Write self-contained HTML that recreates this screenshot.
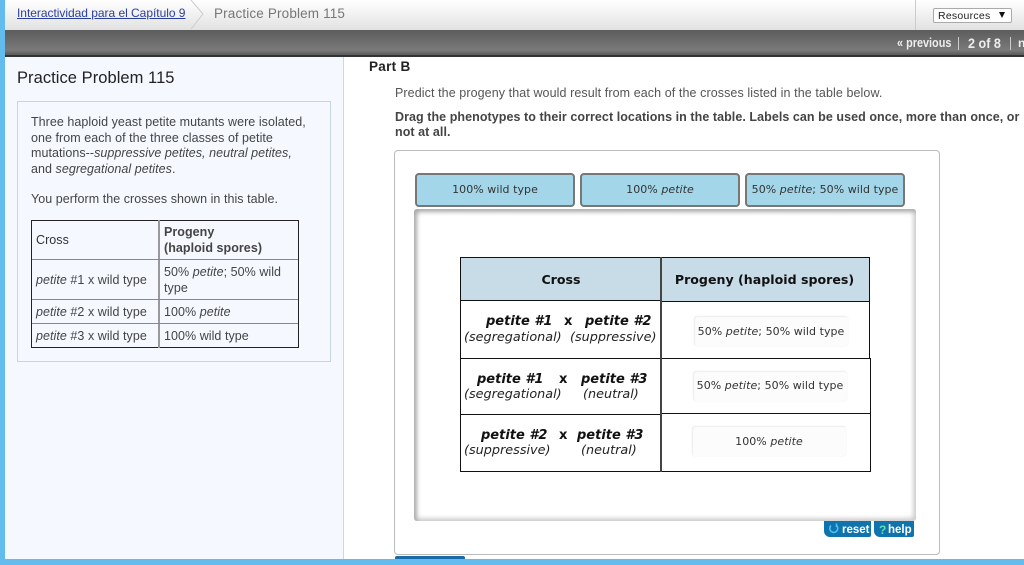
<!DOCTYPE html>
<html><head><meta charset="utf-8"><style>
html,body{margin:0;padding:0}
body{width:1024px;height:565px;overflow:hidden;position:relative;background:#fff;font-family:"Liberation Sans",sans-serif;color:#444}
.a{position:absolute;white-space:nowrap}
.b{position:absolute;box-sizing:border-box}
.v{font-family:"DejaVu Sans",sans-serif}
.ln{position:absolute;background:#111}
.chip{position:absolute;box-sizing:border-box;width:160px;height:34px;background:#a4d6ea;border:2px solid #777;border-radius:4px;font:11px/30px "DejaVu Sans",sans-serif;letter-spacing:.05px;text-align:center;color:#333;white-space:nowrap}
.drop{position:absolute;box-sizing:border-box;background:#fcfcfc;border-radius:3px;box-shadow:0 0 1px #ddd,inset 1px 1px 1px #eee;width:154px;height:30px;font:11px/30px "DejaVu Sans",sans-serif;letter-spacing:.05px;text-align:center;color:#333;white-space:nowrap}
.t{font-size:12.5px;line-height:15.5px;color:#444;letter-spacing:.05px}
.c{position:absolute;font:bold italic 13px/15px "DejaVu Sans",sans-serif;color:#111;white-space:pre}
.s{position:absolute;font:italic 12.8px/15px "DejaVu Sans",sans-serif;color:#222;white-space:pre}
</style></head><body>
<div class="b" style="left:0;top:0;width:1024px;height:30px;background:linear-gradient(#fff,#e2e2e2)"></div>
<svg class="b" style="left:190px;top:0" width="16" height="30"><path d="M1 0L13 14L1 29" fill="none" stroke="#ccc"/></svg>
<div class="a" style="left:17px;top:6px;font-size:12px;line-height:14px;color:#2b3f9e;text-decoration:underline;letter-spacing:-.03px">Interactividad para el Capítulo 9</div>
<div class="a" style="left:214px;top:6px;font-size:13.5px;line-height:16px;color:#777;letter-spacing:.15px">Practice Problem 115</div>
<div class="b" style="left:915px;top:0;width:1px;height:30px;background:#ccc"></div>
<div class="b" style="left:933px;top:8px;width:79px;height:15px;background:#fff;border:1px solid #aaa;border-radius:2px"></div>
<div class="a" style="left:938px;top:10px;font-size:10.5px;line-height:13px;color:#222;letter-spacing:.25px">Resources</div>
<svg class="b" style="left:998px;top:11px" width="9" height="8"><path d="M1 1H7L4 7Z" fill="#111"/></svg>
<div class="b" style="left:5px;top:30px;width:1019px;height:27px;background:linear-gradient(#5c5c5c,#7a7a7a 75%,#5a5a5a 92%,#333 93%)"></div>
<div class="a" style="left:897px;top:36px;font-size:12.5px;line-height:15px;color:#eee;font-weight:bold;transform-origin:0 0;transform:scaleX(.87)">« previous</div>
<div class="b" style="left:958px;top:37px;width:1px;height:13px;background:#ccc"></div>
<div class="a" style="left:968px;top:35px;font-size:14px;line-height:16px;color:#eee;font-weight:bold;transform-origin:0 0;transform:scaleX(.9)">2 of 8</div>
<div class="b" style="left:1010px;top:37px;width:1px;height:13px;background:#ccc"></div>
<div class="a" style="left:1018px;top:36px;font-size:12px;line-height:15px;color:#eee;font-weight:bold">n</div>

<div class="b" style="left:0;top:0;width:5px;height:565px;background:#64bcee"></div>
<div class="b" style="left:0;top:559px;width:1024px;height:6px;background:#64bcee;z-index:5"></div>
<div class="b" style="left:5px;top:57px;width:339px;height:502px;background:#f5f9ff;border-right:1px solid #c9d8e4"></div>
<div class="a" style="left:17px;top:69px;font-size:16.5px;line-height:19px;color:#222;letter-spacing:.05px">Practice Problem 115</div>
<div class="b" style="left:17px;top:101px;width:314px;height:261px;border:1px solid #c5d6e3"></div>
<div class="a t" style="left:31px;top:115px">Three haploid yeast petite mutants were isolated,<br>one from each of the three classes of petite<br>mutations--<i>suppressive petites, neutral petites,</i><br>and <i>segregational petites</i>.</div>
<div class="a t" style="left:31px;top:192px">You perform the crosses shown in this table.</div>
<div class="b" style="left:31px;top:220px;width:268px;height:128px;border:1px solid #222"></div>
<div class="b" style="left:158px;top:220px;width:2px;height:128px;background:#999"></div>
<div class="b" style="left:32px;top:259px;width:266px;height:1px;background:#888"></div>
<div class="b" style="left:32px;top:299px;width:266px;height:1px;background:#888"></div>
<div class="b" style="left:32px;top:323px;width:266px;height:1px;background:#888"></div>
<div class="a t" style="left:36px;top:233px;color:#333">Cross</div>
<div class="a t" style="left:164px;top:225px"><b style="font-weight:bold;color:#444">Progeny<br>(haploid spores)</b></div>
<div class="a t" style="left:36px;top:273px"><i>petite</i> #1 x wild type</div>
<div class="a t" style="left:164px;top:265px">50% <i>petite</i>; 50% wild<br>type</div>
<div class="a t" style="left:36px;top:305px"><i>petite</i> #2 x wild type</div>
<div class="a t" style="left:164px;top:305px">100% <i>petite</i></div>
<div class="a t" style="left:36px;top:329px"><i>petite</i> #3 x wild type</div>
<div class="a t" style="left:164px;top:329px">100% wild type</div>

<div class="a" style="left:369px;top:59px;font-size:13.5px;line-height:16px;font-weight:bold;color:#222;letter-spacing:.3px">Part B</div>
<div class="a" style="left:395px;top:86px;font-size:12.5px;line-height:15px;color:#555;letter-spacing:.09px">Predict the progeny that would result from each of the crosses listed in the table below.</div>
<div class="a" style="left:395px;top:110px;font-size:12.5px;line-height:15px;font-weight:bold;color:#444;letter-spacing:.06px">Drag the phenotypes to their correct locations in the table. Labels can be used once, more than once, or<br>not at all.</div>

<div class="b" style="left:394px;top:150px;width:546px;height:405px;border:1px solid #bbb;border-radius:4px"></div>
<div class="chip" style="left:415px;top:173px">100% wild type</div>
<div class="chip" style="left:580px;top:173px">100% <i>petite</i></div>
<div class="chip" style="left:745px;top:173px">50% <i>petite</i>; 50% wild type</div>
<div class="b" style="left:414px;top:209px;width:502px;height:312px;background:#fff;border-radius:3px;box-shadow:inset 3px 3px 4px #aaa,inset -3px -3px 4px #d0d0d0"></div>

<div class="b" style="left:461px;top:258px;width:200px;height:43px;background:#c8dce8"></div>
<div class="b" style="left:661px;top:258px;width:209px;height:44px;background:#c8dce8"></div>
<div class="a v" style="left:461px;top:272px;width:200px;text-align:center;font-size:12.6px;line-height:16px;font-weight:bold;color:#111">Cross</div>
<div class="a v" style="left:660px;top:272px;width:209px;text-align:center;font-size:12.6px;line-height:16px;font-weight:bold;color:#111">Progeny (haploid spores)</div>
<div class="ln" style="left:460px;top:257px;width:410px;height:1px"></div>
<div class="ln" style="left:460px;top:300px;width:201px;height:1px"></div>
<div class="ln" style="left:661px;top:301px;width:209px;height:1px"></div>
<div class="ln" style="left:460px;top:358px;width:411px;height:1px"></div>
<div class="ln" style="left:460px;top:414px;width:201px;height:1px"></div>
<div class="ln" style="left:661px;top:413px;width:210px;height:1px"></div>
<div class="ln" style="left:460px;top:471px;width:411px;height:1px"></div>
<div class="ln" style="left:460px;top:257px;width:1px;height:215px"></div>
<div class="ln" style="left:660px;top:257px;width:2px;height:215px;background:#444"></div>
<div class="ln" style="left:869px;top:257px;width:1px;height:102px"></div>
<div class="ln" style="left:870px;top:358px;width:1px;height:114px"></div>

<div class="c" style="left:486px;top:314px">petite #1</div><div class="c" style="left:564px;top:314px;font-style:normal">x</div><div class="c" style="left:585px;top:314px">petite #2</div>
<div class="s" style="left:464px;top:330px">(segregational)</div><div class="s" style="left:570px;top:330px">(suppressive)</div>
<div class="c" style="left:477px;top:372px">petite #1</div><div class="c" style="left:559px;top:372px;font-style:normal">x</div><div class="c" style="left:581px;top:372px">petite #3</div>
<div class="s" style="left:464px;top:387px">(segregational)</div><div class="s" style="left:583px;top:387px">(neutral)</div>
<div class="c" style="left:481px;top:428px">petite #2</div><div class="c" style="left:559px;top:428px;font-style:normal">x</div><div class="c" style="left:577px;top:428px">petite #3</div>
<div class="s" style="left:464px;top:443px">(suppressive)</div><div class="s" style="left:581px;top:443px">(neutral)</div>

<div class="drop" style="left:694px;top:316px;line-height:31px">50% <i>petite</i>; 50% wild type</div>
<div class="drop" style="left:693px;top:371px">50% <i>petite</i>; 50% wild type</div>
<div class="drop" style="left:692px;top:426px;line-height:31px">100% <i>petite</i></div>

<div class="b" style="left:824px;top:521px;width:47px;height:16px;background:#0f73ae;border-radius:0 0 2px 6px"></div>
<div class="b" style="left:874px;top:521px;width:40px;height:16px;background:#0f73ae;border-radius:0 0 2px 6px"></div>
<svg class="b" style="left:828px;top:523px" width="12" height="12"><path d="M3 2.5A4 4 0 1 0 8.5 2.5M8.5 .5V4" fill="none" stroke="#4cc0f0" stroke-width="1.6"/></svg>
<div class="a" style="left:842px;top:523px;font-size:11.5px;line-height:14px;font-weight:bold;color:#fff">reset</div>
<div class="a" style="left:879px;top:523px;font-size:12px;line-height:14px;font-weight:bold;color:#5fe0b0">?</div>
<div class="a" style="left:888px;top:523px;font-size:11.5px;line-height:14px;font-weight:bold;color:#fff">help</div>
<div class="b" style="left:395px;top:556px;width:70px;height:3px;background:#1a6aa8;border-radius:2px 2px 0 0"></div>
</body></html>
